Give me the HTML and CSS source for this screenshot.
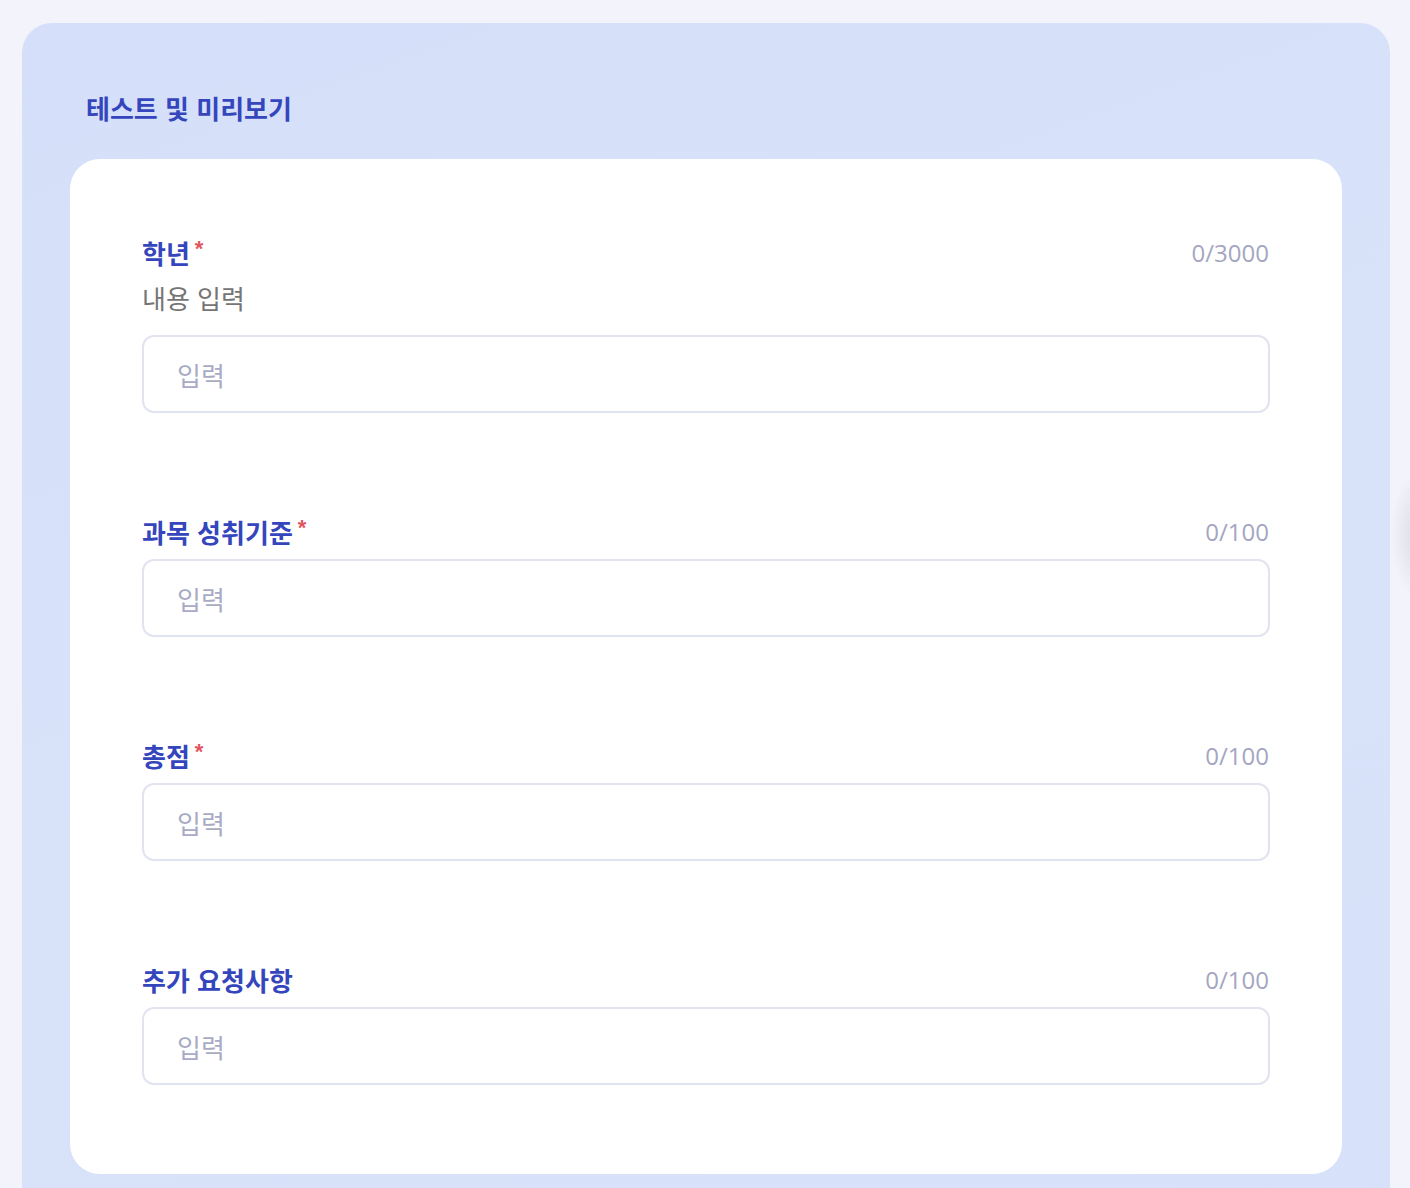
FILE: index.html
```html
<!DOCTYPE html>
<html lang="ko">
<head>
<meta charset="utf-8">
<title>테스트 및 미리보기</title>
<link rel="stylesheet" href="styles.css">
</head>
<body>
<div class="page">
  <section class="panel">
    <h2 class="panel-title">테스트 및 미리보기</h2>
    <div class="card">
      <div class="field">
        <div class="field-head">
          <label class="field-label">학년<span class="req">*</span></label>
          <span class="counter">0/3000</span>
        </div>
        <p class="field-desc">내용 입력</p>
        <input class="field-input" type="text" placeholder="입력">
      </div>
      <div class="field">
        <div class="field-head">
          <label class="field-label">과목 성취기준<span class="req">*</span></label>
          <span class="counter">0/100</span>
        </div>
        <input class="field-input" type="text" placeholder="입력">
      </div>
      <div class="field">
        <div class="field-head">
          <label class="field-label">총점<span class="req">*</span></label>
          <span class="counter">0/100</span>
        </div>
        <input class="field-input" type="text" placeholder="입력">
      </div>
      <div class="field">
        <div class="field-head">
          <label class="field-label">추가 요청사항</label>
          <span class="counter">0/100</span>
        </div>
        <input class="field-input" type="text" placeholder="입력">
      </div>
    </div>
  </section>
  <div class="side-shadow"></div>
</div>
</body>
</html>
```

FILE: styles.css
```css
* { box-sizing: border-box; }
html, body { margin: 0; padding: 0; }
body {
  background: #f2f3fb;
  font-family: "Noto Sans CJK KR", "Noto Sans", sans-serif;
  overflow: hidden;
}
.page {
  position: relative;
  height: 1188px;
  padding: 23px 20px 0 22px;
}
.panel {
  width: 1368px;
  height: 1200px;
  background: linear-gradient(160deg, #d5dff9 0%, #d8e3fa 50%, #d7e1f9 100%);
  border-radius: 30px;
  padding: 67px 48px 0 48px;
}
.panel-title {
  margin: 0 0 33px 16px;
  font-size: 26px;
  line-height: 36px;
  font-weight: 700;
  color: #3546bd;
}
.card {
  background: #fff;
  border-radius: 30px;
  padding: 76px 72px 89px 72px;
  display: flex;
  flex-direction: column;
  gap: 101px;
}
.field { display: flex; flex-direction: column; }
.field-head {
  display: flex;
  justify-content: space-between;
  align-items: center;
  height: 34px;
  margin-bottom: 11px;
}
.field-label {
  font-size: 26px;
  font-weight: 700;
  color: #3546bd;
  display: flex;
  align-items: flex-start;
}
.req {
  color: #e0575e;
  font-family: "Liberation Sans", sans-serif;
  font-size: 22px;
  line-height: 1;
  margin-left: 5px;
  margin-top: 4px;
}
.counter {
  font-family: "Open Sans", "Noto Sans", sans-serif;
  font-size: 24px;
  color: #a4a6c2;
  margin-right: 1px;
}
.field-desc {
  margin: 1px 0 20px 0;
  font-size: 26px;
  line-height: 34px;
  color: #757575;
}
.field-input {
  width: 100%;
  height: 78px;
  border: 2px solid #e2e3f0;
  border-radius: 12px;
  padding: 0 33px;
  font-family: "Noto Sans CJK KR", "Noto Sans", sans-serif;
  font-size: 26px;
  color: #333;
  background: #fff;
  outline: none;
}
.field-input::placeholder { color: #a9abc6; }
.side-shadow {
  position: absolute;
  right: -40px;
  top: 470px;
  width: 60px;
  height: 130px;
  border-radius: 50%;
  background: radial-gradient(ellipse at center, rgba(200,200,210,0.6) 0%, rgba(230,230,240,0) 70%);
}
```
